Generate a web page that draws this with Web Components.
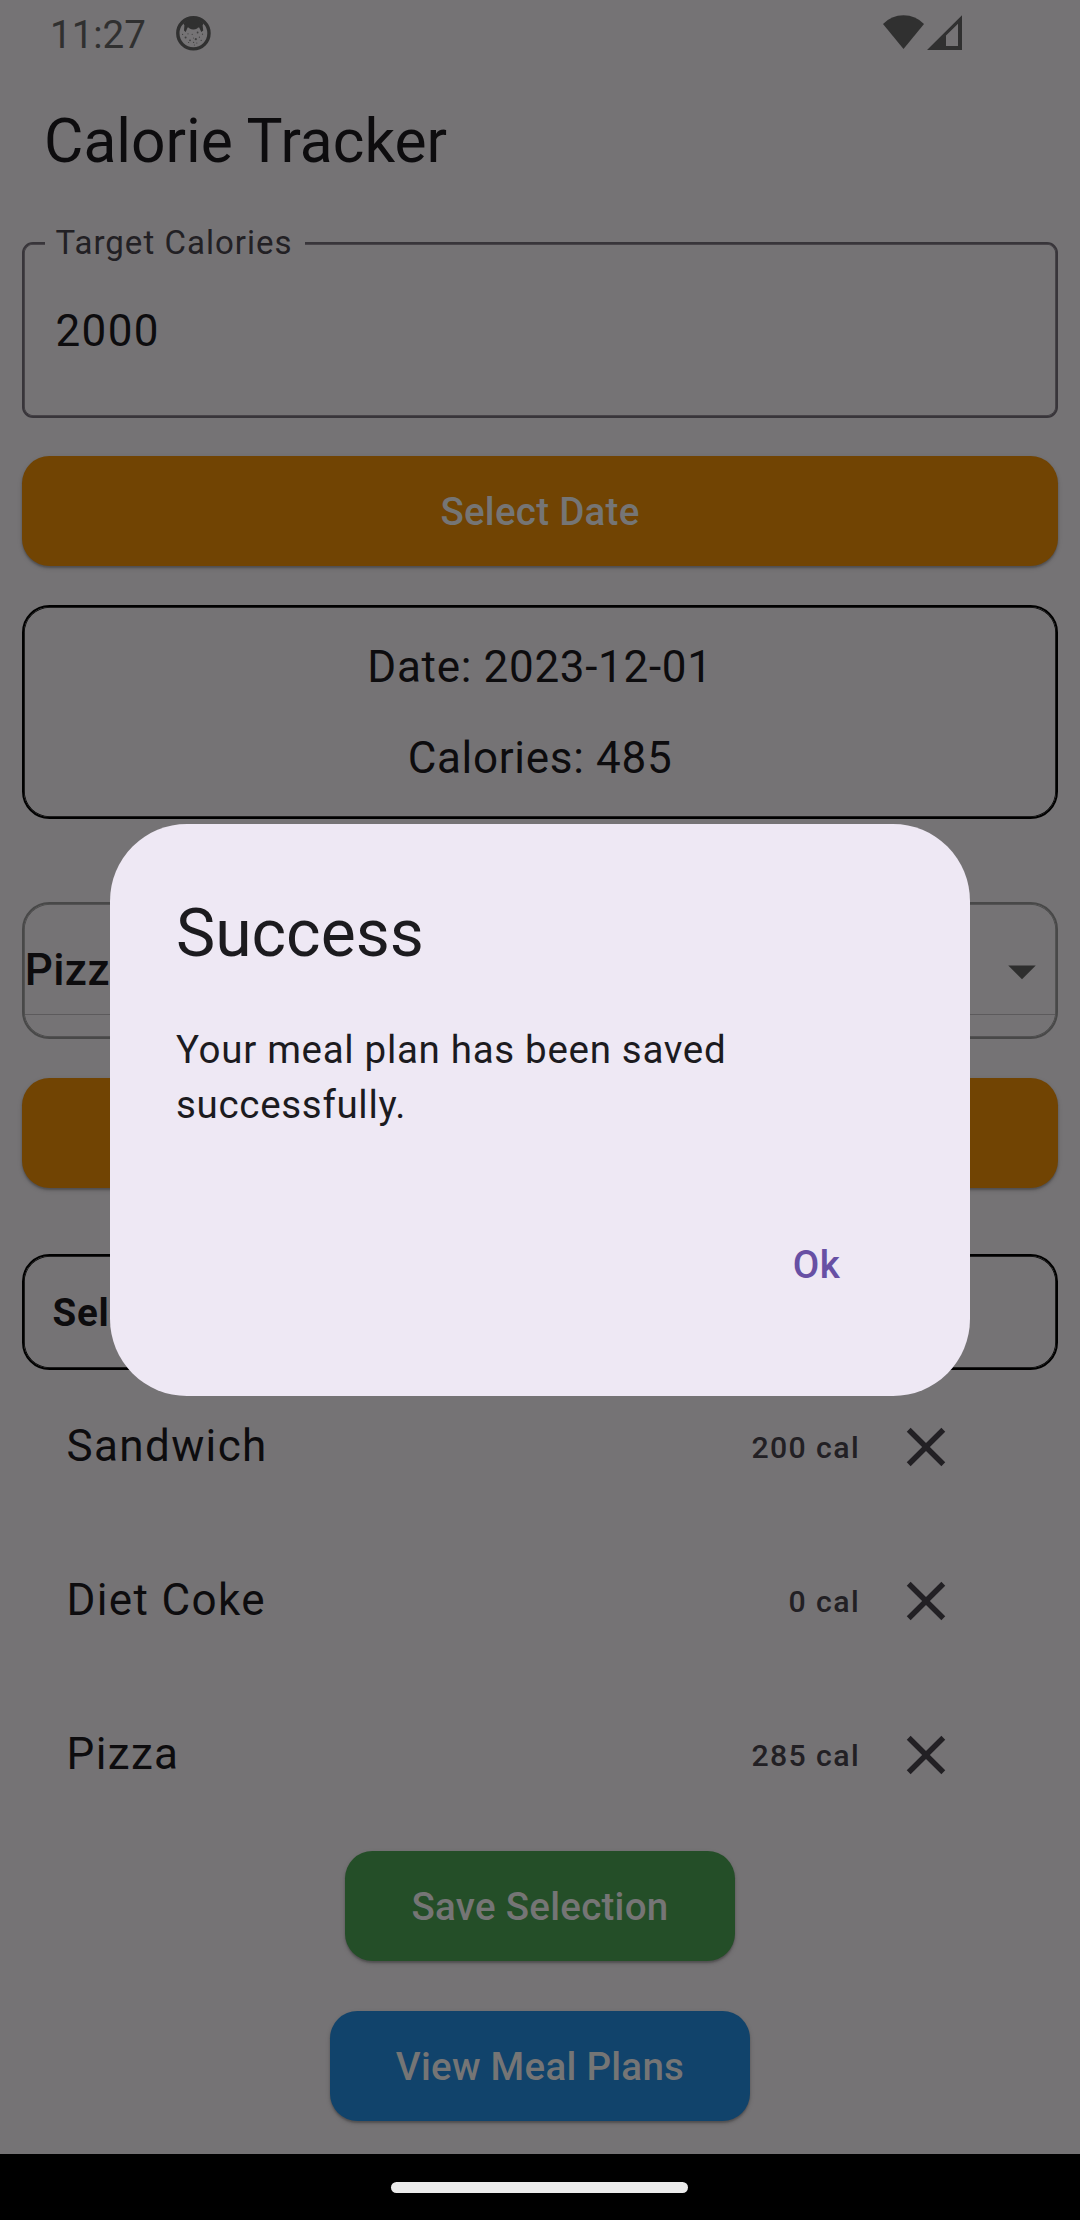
<!DOCTYPE html>
<html lang="en">
<head>
<meta charset="utf-8">
<title>Calorie Tracker</title>
<style>
  html, body { margin: 0; padding: 0; background: #757375; }
  body { width: 1080px; height: 2220px; overflow: hidden; font-family: Roboto, sans-serif; color: #0d0c0e; }
</style>
</head>
<body>
<calorie-app></calorie-app>
<script>
const define = (name, html) => customElements.define(name, class extends HTMLElement {
  constructor() {
    super();
    const t = document.createElement('template');
    t.innerHTML = html;
    this.attachShadow({ mode: 'open' }).appendChild(t.content.cloneNode(true));
  }
});

define('status-bar', `
<style>
  :host { display: flex; align-items: flex-start; height: 66px; padding: 0 117px 0 50px; box-sizing: border-box; color: #303030; }
  span { font-size: 38.5px; line-height: 45px; margin-top: 12px; width: 125px; white-space: nowrap; }
  .debug { margin-top: 15px; width: 37px; height: 37px; }
  .net { margin: 14px 0 0 auto; width: 82px; height: 38px; }
</style>
<span>11:27</span>
<svg class="debug" viewBox="0 0 37 37">
  <circle cx="18.4" cy="18.3" r="15.6" fill="none" stroke="#303030" stroke-width="3.4"/>
  <path d="M8.2 8.4Q18.4 -1.4 28.6 8.4L27.6 10.2L28.2 15.6L26.3 17L24.2 12.6Q23 12 22.2 13.4Q18.4 15.4 14.6 13.4Q13.8 12 12.6 12.6L10.7 17L9 15.6L9.4 10.2Z" fill="#303030"/>
  <g fill="#404040">
    <circle cx="22.6" cy="17.5" r=".9"/><circle cx="10.6" cy="22.4" r="1"/><circle cx="20.8" cy="24.2" r="1.1"/>
    <circle cx="15" cy="25.3" r=".9"/><circle cx="17.2" cy="19.3" r=".6"/><circle cx="13" cy="18.8" r=".6"/>
    <circle cx="24.4" cy="22.2" r=".6"/><circle cx="18.6" cy="27.4" r=".6"/><circle cx="27.5" cy="19.2" r=".6"/>
    <circle cx="13.6" cy="27.5" r=".6"/><circle cx="21.8" cy="28" r=".6"/><circle cx="7.6" cy="19.4" r=".6"/>
    <circle cx="26.2" cy="25.4" r=".6"/><circle cx="18.5" cy="23" r=".5"/><circle cx="19.4" cy="30" r=".5"/>
  </g>
</svg>
<svg class="net" viewBox="0 0 82 38">
  <path d="M2 10Q10.500 1.300 22.500 1.300T43 10L22.500 35Z" fill="#303030"/>
  <path fill-rule="evenodd" d="M46 36L81 1.300V36ZM65 21.500V32H77V9.800Z" fill="#303030"/>
</svg>`);

define('app-bar', `
<style>
  :host { display: flex; align-items: center; height: 154px; padding: 0 44px 3px; box-sizing: border-box; font-size: 60.5px; line-height: 77px; }
</style><slot></slot>`);

define('text-field', `
<style>
  :host { display: flex; align-items: center; position: relative; height: 176px; margin-top: 22px; box-sizing: border-box; padding-left: 31.5px; padding-top: 2px;
    border: 2px solid #38353a; box-shadow: inset 0 0 0 .75px #38353a; border-radius: 11px; font-size: 44px; letter-spacing: 1.375px; }
  label { position: absolute; left: 21px; top: -21px; padding: 0 12px 0 10.500px; background: #757375; color: #222024; font-size: 33px; line-height: 40px; letter-spacing: 1.03px; }
</style>
<label><slot name="label"></slot></label><slot></slot>`);

define('raised-button', `
<style>
  :host { display: flex; align-items: center; justify-content: center; height: 110px; box-sizing: border-box; padding: 0 66px 0; border-radius: 27.5px;
    background: var(--fill, #714403); color: #757575; font-weight: 500; font-size: 38.5px; line-height: 55px; letter-spacing: .275px; white-space: nowrap;
    box-shadow: 0 2px 2px rgba(0,0,0,.22), 0 2px 5px rgba(0,0,0,.15); }
</style><slot></slot>`);

define('info-card', `
<style>
  :host { display: flex; flex-direction: column; align-items: center; height: 214px; box-sizing: border-box; padding-top: 27px;
    border: 2px solid #000; box-shadow: inset 0 0 0 .75px #000; border-radius: 27.5px; font-size: 44px; line-height: 66px; letter-spacing: .6875px; gap: 25px; }
</style><slot></slot>`);

define('food-select', `
<style>
  :host { display: block; height: 137px; box-sizing: border-box; border: 2px solid #484848; box-shadow: inset 0 0 0 .75px #484848; border-radius: 27.5px;
    font-size: 44px; font-weight: 500; letter-spacing: .41px; }
  div { display: flex; align-items: center; justify-content: space-between; height: 111px; box-sizing: border-box; padding: 22px 0 0 0; margin: 0 .75px; border-bottom: 1px solid #5c5a5c; }
  svg { width: 66px; height: 66px; margin-top: 1px; }
</style>
<div><slot></slot><svg viewBox="0 0 24 24"><path d="M7 10l5 5 5-5z" fill="#2e2e2e"/></svg></div>`);

define('section-box', `
<style>
  :host { display: flex; align-items: center; height: 116px; box-sizing: border-box; padding: 1px 0 0 28.5px; border: 2px solid #000; box-shadow: inset 0 0 0 .75px #000; border-radius: 27.5px;
    font-size: 38.5px; font-weight: 700; letter-spacing: .69px; }
</style><slot></slot>`);

define('food-row', `
<style>
  :host { display: flex; align-items: center; height: 154px; padding: 0 99px 0 44.5px; box-sizing: border-box; }
  .name { flex: 1; font-size: 44px; line-height: 66px; letter-spacing: 1.375px; padding-bottom: 2px; }
  .cal { font-size: 30.25px; line-height: 44px; font-weight: 500; letter-spacing: 1.375px; color: #222024; padding-top: 2px; }
  svg { width: 66px; height: 66px; margin-left: 33px; }
</style>
<span class="name"><slot></slot></span><span class="cal"><slot name="cal"></slot></span>
<svg viewBox="0 0 24 24"><path d="M19 6.410L17.590 5 12 10.590 6.410 5 5 6.410 10.590 12 5 17.590 6.410 19 12 13.410 17.590 19 19 17.590 13.410 12z" fill="#222024"/></svg>`);

define('alert-dialog', `
<style>
  :host { position: absolute; left: 110px; top: 824px; width: 860px; height: 572px; box-sizing: border-box; padding: 66px; display: flex; flex-direction: column;
    background: #eee8f4; color: #1c1b1f; border-radius: 77px; }
  .title { font-size: 66px; line-height: 88px; }
  .body { margin-top: 44px; font-size: 38.5px; line-height: 55px; letter-spacing: .69px; }
  .action { align-self: flex-end; margin: 105px 64px 0 0; font-size: 38.5px; font-weight: 500; line-height: 55px; letter-spacing: .275px; color: #6750a4; }
</style>
<div class="title"><slot name="title"></slot></div>
<div class="body"><slot></slot></div>
<div class="action"><slot name="action"></slot></div>`);

define('nav-bar', `
<style>
  :host { display: flex; justify-content: center; height: 66px; background: #000; margin-top: auto; }
  i { width: 297px; height: 11px; margin: 27.5px 1px 0 0; border-radius: 5.5px; background: #ebebeb; }
</style><i></i>`);

define('calorie-app', `
<style>
  :host { display: flex; flex-direction: column; position: relative; width: 1080px; height: 2220px; background: #757375; overflow: hidden; }
  main { display: flex; flex-direction: column; padding: 0 22px; }
  .date { margin-top: 38px; }
  info-card { margin-top: 39px; }
  food-select { margin-top: 83px; }
  .add { margin-top: 39px; }
  section-box { margin-top: 66px; }
  .save { --fill: #244e28; align-self: center; margin-top: 19px; }
  .view { --fill: #11436b; align-self: center; margin-top: 50px; }
</style>
<status-bar></status-bar>
<app-bar>Calorie Tracker</app-bar>
<main>
  <text-field><span slot="label">Target Calories</span>2000</text-field>
  <raised-button class="date">Select Date</raised-button>
  <info-card><span>Date: 2023-12-01</span><span>Calories: 485</span></info-card>
  <food-select>Pizza</food-select>
  <raised-button class="add"></raised-button>
  <section-box>Selected</section-box>
  <food-row>Sandwich<span slot="cal">200 cal</span></food-row>
  <food-row>Diet Coke<span slot="cal">0 cal</span></food-row>
  <food-row>Pizza<span slot="cal">285 cal</span></food-row>
  <raised-button class="save">Save Selection</raised-button>
  <raised-button class="view">View Meal Plans</raised-button>
</main>
<nav-bar></nav-bar>
<alert-dialog><span slot="title">Success</span>Your meal plan has been saved successfully.<span slot="action">Ok</span></alert-dialog>`);
</script>
</body>
</html>
